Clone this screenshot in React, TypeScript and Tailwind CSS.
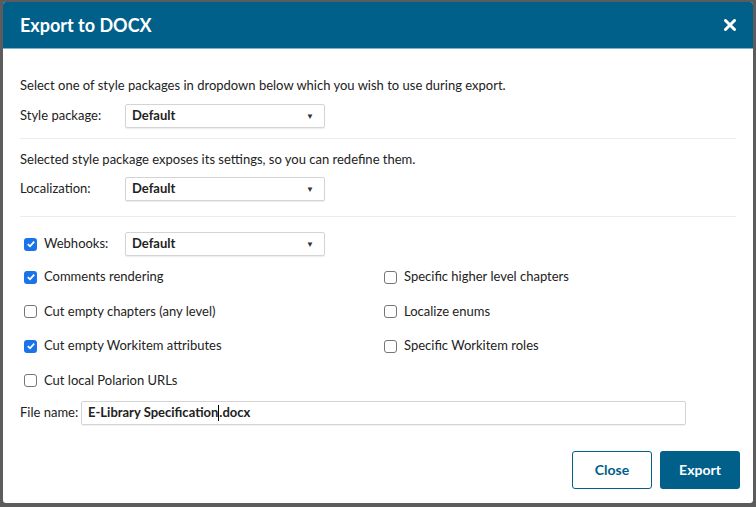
import { useState } from 'react';

const BLUE = '#00608a';

function Select({ value }: { value: string }) {
  return (
    <div className="w-[200px] h-6 border border-[#d4d4d4] rounded-[2px] bg-white flex items-center justify-between pl-[6px] pr-[10px] shadow-[0_1px_1px_rgba(0,0,0,0.08)]">
      <span className="font-bold text-[13px] text-[#222]">{value}</span>
      <span className="text-[8px] text-[#333]">▼</span>
    </div>
  );
}

function Check({ checked, label }: { checked: boolean; label: string }) {
  return (
    <div className="flex items-center h-5">
      <div
        className={`ml-1 w-[13px] h-[13px] rounded-[3px] flex items-center justify-center ${
          checked ? 'bg-[#1a73e8]' : 'border border-[#767676] bg-white'
        }`}
      >
        {checked && (
          <svg width="10" height="10" viewBox="0 0 10 10">
            <path d="M1.8 5.2 L4 7.3 L8.2 2.6" fill="none" stroke="white" strokeWidth="1.8" />
          </svg>
        )}
      </div>
      <span className="ml-[7px] text-[13px] text-[#222]">{label}</span>
    </div>
  );
}

export default function App() {
  const [fileName] = useState('E-Library Specification.docx');

  return (
    <div className="w-[756px] h-[507px] bg-[#5c5c5c] pt-[2px] pl-[3px] overflow-hidden" style={{ fontFamily: 'Lato, "Open Sans", sans-serif' }}>
      <div className="w-[750px] h-[501px] bg-white rounded-[3px] flex flex-col overflow-hidden">
        {/* Header */}
        <div className="h-[47px] shrink-0 flex items-center justify-between pl-[17px] pr-[17px] border-b border-[#7fb3cc]" style={{ backgroundColor: BLUE }}>
          <span className="text-white font-bold text-[18px]">Export to DOCX</span>
          <svg width="12" height="12" viewBox="0 0 12 12">
            <path d="M1.5 1.5 L10.5 10.5 M10.5 1.5 L1.5 10.5" stroke="white" strokeWidth="3" strokeLinecap="round" />
          </svg>
        </div>

        {/* Body */}
        <div className="flex-1 flex flex-col px-[17px] text-[13px] text-[#222]">
          <div className="mt-[27px] h-5 flex items-center">
            Select one of style packages in dropdown below which you wish to use during export.
          </div>
          <div className="mt-2 flex items-center">
            <span className="w-[105px]">Style package:</span>
            <Select value="Default" />
          </div>
          <div className="mt-[10px] h-px bg-[#ececec]" />
          <div className="mt-[11px] h-5 flex items-center">
            Selected style package exposes its settings, so you can redefine them.
          </div>
          <div className="mt-[7px] flex items-center">
            <span className="w-[105px]">Localization:</span>
            <Select value="Default" />
          </div>
          <div className="mt-[15px] h-px bg-[#ececec]" />

          <div className="mt-[15px] flex items-center">
            <div className="w-[105px]">
              <Check checked label="Webhooks:" />
            </div>
            <Select value="Default" />
          </div>

          <div className="mt-[11px] grid grid-cols-[360px_1fr] gap-y-[14.5px]">
            <Check checked label="Comments rendering" />
            <Check checked={false} label="Specific higher level chapters" />
            <Check checked={false} label="Cut empty chapters (any level)" />
            <Check checked={false} label="Localize enums" />
            <Check checked label="Cut empty Workitem attributes" />
            <Check checked={false} label="Specific Workitem roles" />
            <Check checked={false} label="Cut local Polarion URLs" />
          </div>

          <div className="mt-[10px] flex items-center">
            <span className="w-[61px]">File name:</span>
            <div className="w-[605px] h-6 border border-[#d4d4d4] rounded-[2px] flex items-center pl-[6px] shadow-[0_1px_1px_rgba(0,0,0,0.06)]">
              <span className="font-bold text-[13px]">E-Library Specification</span>
              <span className="w-px h-4 bg-black" />
              <span className="font-bold text-[13px]">{fileName.slice(23)}</span>
            </div>
          </div>

          <div className="mt-[26px] flex justify-end gap-2 mr-[-4px]">
            <button className="w-[80px] h-[38px] rounded-[3px] border border-[#00608a] bg-white text-[#00608a] font-bold text-[14px]">
              Close
            </button>
            <button className="w-[80px] h-[38px] rounded-[3px] text-white font-bold text-[14px]" style={{ backgroundColor: BLUE }}>
              Export
            </button>
          </div>
        </div>
      </div>
    </div>
  );
}
